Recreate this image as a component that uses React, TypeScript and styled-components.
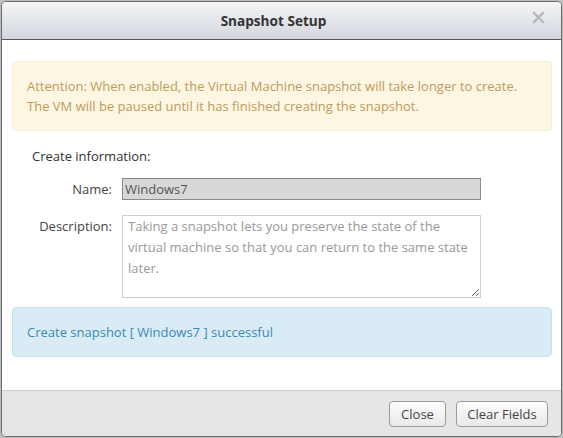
import React from "react";
import styled, { createGlobalStyle } from "styled-components";

const Global = createGlobalStyle`
  html, body { margin: 0; padding: 0; background: #bdbdbd; }
  body { font-family: "Open Sans", "Noto Sans", Arial, sans-serif; font-size: 13px; color: #444; }
  * { box-sizing: border-box; }
`;

const Dialog = styled.div`
  width: 561px;
  height: 436px;
  margin: 1px 0 0 1px;
  border: 1px solid #6a6a6a;
  border-radius: 5px;
  overflow: hidden;
  background: #fff;
  display: flex;
  flex-direction: column;
`;

const Header = styled.div`
  height: 38px;
  flex: none;
  display: flex;
  align-items: center;
  justify-content: center;
  position: relative;
  padding-right: 16px;
  background: linear-gradient(#f4f5f7, #d2d7de);
  border-bottom: 1px solid #55595e;
`;

const Title = styled.div`
  font-size: 13.6px;
  font-weight: 700;
  color: #333;
`;

const CloseX = styled.button`
  position: absolute;
  right: 16px;
  top: 9px;
  width: 13px;
  height: 13px;
  padding: 0;
  border: 0;
  background: none;
  display: flex;
`;

const Body = styled.div`
  flex: 1;
  padding: 21px 9px 0 10px;
  display: flex;
  flex-direction: column;
`;

const Alert = styled.div<{ $tone: "warn" | "info" }>`
  border-radius: 4px;
  border: 1px solid ${(p) => (p.$tone === "warn" ? "#faecd1" : "#bfe5f0")};
  background: ${(p) => (p.$tone === "warn" ? "#fcf6e2" : "#d9ecf6")};
  color: ${(p) => (p.$tone === "warn" ? "#c29b5c" : "#3d89b1")};
  padding: 14px 14px;
  line-height: 20px;
  height: ${(p) => (p.$tone === "warn" ? "70px" : "50px")};
`;

const Section = styled.div`
  margin: 16px 0 0 20px;
  line-height: 18px;
  color: #333;
`;

const Form = styled.div`
  display: grid;
  grid-template-columns: 100px 359px;
  column-gap: 10px;
  row-gap: 15px;
  margin: 13px 0 9px 0;
`;

const Label = styled.label`
  text-align: right;
  color: #444;
  line-height: 20px;
  padding-top: 1px;
`;

const NameInput = styled.input`
  height: 22px;
  width: 359px;
  border: 1px solid #8a8a8a;
  background: #d8d8d8;
  color: #555;
  font: inherit;
  padding: 0 2px;
  outline: none;
`;

const Desc = styled.textarea`
  height: 83px;
  width: 359px;
  border: 1px solid #cfcfcf;
  color: #999;
  font: inherit;
  line-height: 21px;
  padding: 0 5px;
  resize: both;
  outline: none;
`;

const Footer = styled.div`
  height: 46px;
  flex: none;
  background: #e6e6e6;
  border-top: 1px solid #cdcdcd;
  display: flex;
  justify-content: flex-end;
  align-items: flex-start;
  padding: 10px 13px 0 0;
  gap: 10px;
`;

const Button = styled.button<{ $w: number }>`
  width: ${(p) => p.$w}px;
  height: 26px;
  border: 1px solid #9b9b9b;
  border-radius: 4px;
  background: linear-gradient(#fcfcfc, #e9e9e9);
  color: #444;
  font: inherit;
  padding: 0;
`;

export default function App() {
  return (
    <>
      <Global />
      <Dialog>
        <Header>
          <Title>Snapshot Setup</Title>
          <CloseX aria-label="close">
            <svg width="13" height="13" viewBox="0 0 13 13">
              <path d="M2 2 L11 11 M11 2 L2 11" stroke="#b8b8b8" strokeWidth="2.4" strokeLinecap="square" />
            </svg>
          </CloseX>
        </Header>
        <Body>
          <Alert $tone="warn">
            Attention: When enabled, the Virtual Machine snapshot will take longer to create.
            <br />
            The VM will be paused until it has finished creating the snapshot.
          </Alert>
          <Section>Create information:</Section>
          <Form>
            <Label>Name:</Label>
            <NameInput readOnly value="Windows7" />
            <Label>Description:</Label>
            <Desc
              readOnly
              value="Taking a snapshot lets you preserve the state of the virtual machine so that you can return to the same state later."
            />
          </Form>
          <Alert $tone="info">Create snapshot [ Windows7 ] successful</Alert>
        </Body>
        <Footer>
          <Button $w={57}>Close</Button>
          <Button $w={92}>Clear Fields</Button>
        </Footer>
      </Dialog>
    </>
  );
}
